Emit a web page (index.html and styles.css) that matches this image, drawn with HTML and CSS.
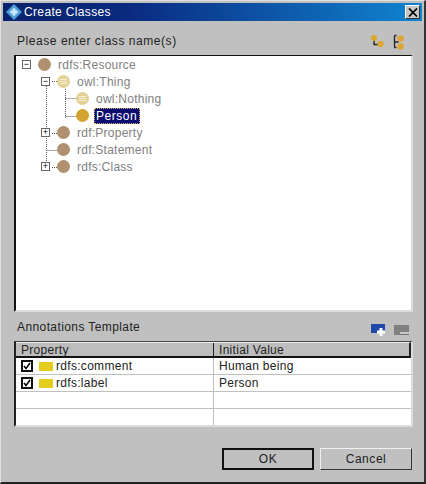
FILE: index.html
```html
<!DOCTYPE html>
<html lang="en">
<head>
    <meta charset="UTF-8">
    <meta name="viewport" content="width=device-width, initial-scale=1.0">
    <title>Create Classes</title>
    <link rel="stylesheet" href="styles.css">
</head>
<body>

    <div class="dialog">
        <div class="titlebar">
            <svg class="title-icon" width="16" height="16" viewBox="0 0 18 18">
                <polygon points="9,0 18,9 9,18 0,9" fill="#4f9bd8"/>
                <polygon points="9,4 14,9 9,14 4,9" fill="#a9d6f5"/>
                <path d="M9 5v8M5 9h8" stroke="#e8f6ff" stroke-width="1"/>
            </svg>
            <span class="title-text">Create Classes</span>
            <span class="close-btn">
                <svg width="10" height="9" viewBox="0 0 10 9"><path d="M1 0.5l8 8M9 0.5l-8 8" stroke="#000" stroke-width="1.7"/></svg>
            </span>
        </div>

        <div class="section-head class-head">
            <span class="label">Please enter class name(s)</span>
            <div class="tools">
                <svg width="15" height="16" viewBox="0 0 15 16">
                    <path d="M4 6v5.5h4" fill="none" stroke="#222" stroke-width="1.3"/>
                    <circle cx="4" cy="5" r="3" fill="#d9a72e"/>
                    <circle cx="10.5" cy="11" r="3.2" fill="#dca534"/>
                </svg>
                <svg width="15" height="17" viewBox="0 0 15 17">
                    <path d="M2.5 2.5v12M2.5 2.5h2M2.5 14.5h2M2.5 9h4" fill="none" stroke="#222" stroke-width="1.3"/>
                    <circle cx="8.5" cy="5.5" r="3.2" fill="#dca534"/>
                    <circle cx="8.5" cy="13.5" r="3.2" fill="#dca534"/>
                </svg>
            </div>
        </div>

        <div class="tree">
            <svg class="tree-lines" width="120" height="130" viewBox="0 0 120 130">
                <g fill="none" stroke="#555" stroke-dasharray="1 1">
                    <path d="M30.5 30v78M49.5 33v28.5M49.5 42.5h12M49.5 60.5h12M36 25.5h6M36 77.5h6M30.5 94.5h11M36 111.5h6"/>
                </g>
            </svg>
            <div class="tree-row">
                <span class="expander">&minus;</span>
                <span class="node node-brown"></span>
                <span class="node-text">rdfs:Resource</span>
            </div>
            <div class="tree-row depth-1">
                <span class="expander">&minus;</span>
                <span class="node node-pale"></span>
                <span class="node-text">owl:Thing</span>
            </div>
            <div class="tree-row depth-2">
                <span class="node node-pale"></span>
                <span class="node-text">owl:Nothing</span>
            </div>
            <div class="tree-row depth-2">
                <span class="node node-gold"></span>
                <span class="node-text selected">Person</span>
            </div>
            <div class="tree-row depth-1">
                <span class="expander">+</span>
                <span class="node node-brown"></span>
                <span class="node-text">rdf:Property</span>
            </div>
            <div class="tree-row depth-1 no-expander">
                <span class="node node-brown"></span>
                <span class="node-text">rdf:Statement</span>
            </div>
            <div class="tree-row depth-1">
                <span class="expander">+</span>
                <span class="node node-brown"></span>
                <span class="node-text">rdfs:Class</span>
            </div>
        </div>

        <div class="section-head annot-head">
            <span class="label">Annotations Template</span>
            <div class="tools annot-tools">
                <svg width="16" height="14" viewBox="0 0 16 14">
                    <rect x="0" y="1" width="14" height="9" fill="#2048a8"/>
                    <path d="M10 5v8M6 9h8" stroke="#fff" stroke-width="3"/>
                </svg>
                <svg width="15" height="11" viewBox="0 0 15 11">
                    <rect x="0" y="0" width="15" height="10" fill="#808080"/>
                    <rect x="6" y="7" width="9" height="3" fill="#c8c8c8"/>
                    <rect x="6" y="9" width="9" height="1" fill="#707070"/>
                </svg>
            </div>
        </div>

        <div class="props">
            <div class="props-row props-header">
                <div class="cell head-cell">Property</div>
                <div class="cell head-cell">Initial Value</div>
            </div>
            <div class="props-row">
                <div class="cell prop-cell">
                    <span class="check">
                        <svg width="8" height="8" viewBox="0 0 8 8"><path d="M1 4l2 2.5L7 1" fill="none" stroke="#000" stroke-width="1.5"/></svg>
                    </span>
                    <span class="swatch"></span>
                    <span>rdfs:comment</span>
                </div>
                <div class="cell">Human being</div>
            </div>
            <div class="props-row">
                <div class="cell prop-cell">
                    <span class="check">
                        <svg width="8" height="8" viewBox="0 0 8 8"><path d="M1 4l2 2.5L7 1" fill="none" stroke="#000" stroke-width="1.5"/></svg>
                    </span>
                    <span class="swatch"></span>
                    <span>rdfs:label</span>
                </div>
                <div class="cell">Person</div>
            </div>
            <div class="props-row">
                <div class="cell"></div>
                <div class="cell"></div>
            </div>
            <div class="props-row">
                <div class="cell"></div>
                <div class="cell"></div>
            </div>
        </div>

        <div class="buttons">
            <button class="btn btn-default">OK</button>
            <button class="btn">Cancel</button>
        </div>
    </div>

</body>
</html>
```

FILE: styles.css
```css
* {
    box-sizing: border-box;
}

body {
    margin: 0;
    padding: 0;
    width: 426px;
    height: 484px;
    overflow: hidden;
    font-family: "Liberation Sans", Arial, sans-serif;
    font-size: 12px;
    letter-spacing: 0.55px;
    color: #222;
    background: #c0c0c0;
}

.dialog {
    width: 426px;
    height: 484px;
    display: flex;
    flex-direction: column;
    padding: 3px 3px 0;
    background: #c0c0c0;
    border-top: 1px solid #e0e0e0;
    border-left: 1px solid #e0e0e0;
    border-right: 2px solid #333;
    border-bottom: 2px solid #222;
}

.titlebar {
    display: flex;
    align-items: center;
    height: 18px;
    margin: -1px -1px 0 -1px;
    padding: 0 2px 0 3px;
    background: linear-gradient(to right, #0a246a, #0a2a80 30%, #1084d0);
    color: #fff;
}

.title-icon {
    flex: none;
}

.title-text {
    flex: 1;
    margin-left: 2px;
    letter-spacing: 0.35px;
}

.close-btn {
    display: flex;
    align-items: center;
    justify-content: center;
    width: 15px;
    height: 14px;
    background: #c8c8c8;
    border: 1px solid;
    border-color: #fff #333 #333 #fff;
}

.section-head {
    display: flex;
    align-items: center;
    justify-content: space-between;
    padding: 0 14px 0 13px;
}

.class-head {
    height: 34px;
    padding-top: 6px;
}

.tools {
    display: flex;
    align-items: center;
    gap: 7px;
}

.tree {
    position: relative;
    width: 399px;
    height: 257px;
    margin-left: 10px;
    background: #fff;
    border-top: 1px solid #111;
    border-left: 2px solid #111;
    border-right: 2px solid #dcdcdc;
    border-bottom: 2px solid #dcdcdc;
    color: #808080;
    letter-spacing: 0.25px;
}

.tree-lines {
    position: absolute;
    top: 0;
    left: 0;
}

.tree-row {
    position: relative;
    display: flex;
    align-items: center;
    height: 17px;
    padding-left: 6px;
}

.depth-1 {
    padding-left: 25px;
}

.depth-2 {
    padding-left: 60px;
}

.no-expander {
    padding-left: 41px;
}

.expander {
    flex: none;
    display: flex;
    align-items: center;
    justify-content: center;
    width: 9px;
    height: 9px;
    margin-right: 7px;
    font-size: 9px;
    line-height: 1;
    letter-spacing: 0;
    color: #000;
    background: #fff;
    border: 1px solid #666;
}

.node {
    flex: none;
    width: 13px;
    height: 13px;
    border-radius: 50%;
}

.node-brown {
    background: #b09070;
}

.node-gold {
    background: #d2a32e;
}

.node-pale {
    background: repeating-linear-gradient(to bottom, #f8f0d8 0 1px, #e2cf90 1px 2px) center / 7px 5px no-repeat, #e2d296;
}

.node-text {
    margin-left: 5px;
    padding: 1px 2px;
    white-space: nowrap;
}

.selected {
    padding: 1px 3px 1px 2px;
    letter-spacing: 0.55px;
    color: #fff;
    background: #0a0a70;
    outline: 1px dotted #e0c060;
    outline-offset: -1px;
}

.annot-head {
    height: 29px;
    padding-right: 12px;
    letter-spacing: 0.4px;
}

.annot-tools {
    align-self: flex-end;
    margin-bottom: 4px;
}

.props {
    width: 399px;
    height: 86px;
    margin-left: 10px;
    background: #fff;
    border-top: 1px solid #444;
    border-left: 2px solid #222;
    border-right: 2px solid #dcdcdc;
    border-bottom: 2px solid #dcdcdc;
    letter-spacing: 0.3px;
}

.props-row {
    display: grid;
    grid-template-columns: 197px 1fr;
    height: 17px;
    border-bottom: 1px solid #c0c0c0;
}

.props-row:last-child {
    height: 16px;
    border-bottom: none;
}

.props-header {
    height: 16px;
    background: #bdbdbd;
    border-bottom: 2px solid #111;
    border-right: 2px solid #222;
    border-top: 1px solid #eee;
}

.cell {
    display: flex;
    align-items: center;
    padding-left: 5px;
    white-space: nowrap;
    border-left: 1px solid #c0c0c0;
}

.cell:first-child {
    border-left: none;
}

.head-cell {
    border-left: 1px solid #222;
}

.head-cell:first-child {
    border-left: none;
}

.prop-cell {
    padding-left: 5px;
}

.check {
    flex: none;
    display: flex;
    align-items: center;
    justify-content: center;
    width: 12px;
    height: 12px;
    margin-right: 6px;
    background: #fff;
    border: 2px solid #111;
}

.swatch {
    flex: none;
    width: 14px;
    height: 9px;
    margin-right: 3px;
    background: #e4cc1c;
}

.buttons {
    display: flex;
    justify-content: flex-end;
    gap: 6px;
    margin-top: 21px;
    padding-right: 9px;
}

.btn {
    width: 92px;
    height: 22px;
    padding: 0;
    font: inherit;
    letter-spacing: 0.55px;
    color: #222;
    background: #c0c0c0;
    border: 1px solid;
    border-color: #f0f0f0 #333 #333 #f0f0f0;
}

.btn-default {
    border: 2px solid #111;
}
```
